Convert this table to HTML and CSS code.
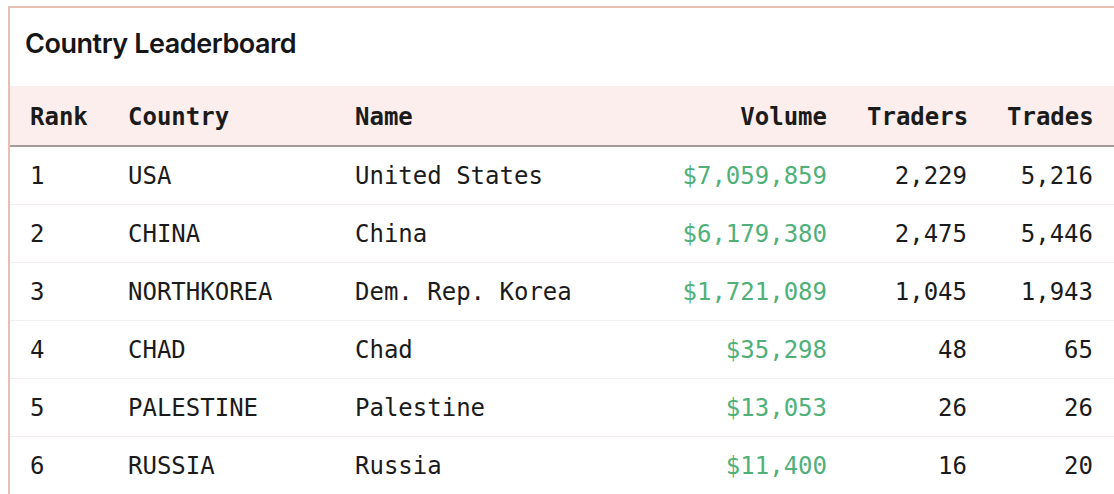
FILE: index.html
```html
<!DOCTYPE html>
<html>
<head>
<meta charset="utf-8">
<link rel="stylesheet" href="styles.css">
</head>
<body>
<div class="card">
  <h2 class="title">Country Leaderboard</h2>
  <table class="board">
    <colgroup>
      <col class="c-rank"><col class="c-country"><col class="c-name"><col class="c-vol"><col class="c-traders"><col class="c-trades">
    </colgroup>
    <thead>
      <tr><th>Rank</th><th>Country</th><th>Name</th><th class="num">Volume</th><th class="num">Traders</th><th class="num">Trades</th></tr>
    </thead>
    <tbody>
      <tr><td>1</td><td>USA</td><td>United States</td><td class="num vol">$7,059,859</td><td class="num">2,229</td><td class="num">5,216</td></tr>
      <tr><td>2</td><td>CHINA</td><td>China</td><td class="num vol">$6,179,380</td><td class="num">2,475</td><td class="num">5,446</td></tr>
      <tr><td>3</td><td>NORTHKOREA</td><td>Dem. Rep. Korea</td><td class="num vol">$1,721,089</td><td class="num">1,045</td><td class="num">1,943</td></tr>
      <tr><td>4</td><td>CHAD</td><td>Chad</td><td class="num vol">$35,298</td><td class="num">48</td><td class="num">65</td></tr>
      <tr><td>5</td><td>PALESTINE</td><td>Palestine</td><td class="num vol">$13,053</td><td class="num">26</td><td class="num">26</td></tr>
      <tr><td>6</td><td>RUSSIA</td><td>Russia</td><td class="num vol">$11,400</td><td class="num">16</td><td class="num">20</td></tr>
    </tbody>
  </table>
</div>
</body>
</html>
```
FILE: styles.css
```css
html, body {
  margin: 0;
  padding: 0;
  background: #ffffff;
  overflow: hidden;
}
body {
  padding: 6px 0 0 8px;
}
.card {
  width: 1104px;
  border: 2px solid #e6c0b2;
  background: #ffffff;
}
.title {
  margin: 0;
  height: 78px;
  box-sizing: border-box;
  padding: 19px 0 0 15px;
  font-family: "Inter", "Noto Sans", sans-serif;
  font-weight: 600;
  font-size: 27px;
  line-height: 34px;
  color: #161616;
  letter-spacing: -0.45px;
}
.board {
  width: 100%;
  table-layout: fixed;
  border-collapse: collapse;
  font-family: "DejaVu Sans Mono", "Liberation Mono", monospace;
  font-size: 24px;
  color: #1b1b1b;
}
.c-rank { width: 98px; }
.c-country { width: 227px; }
.c-name { width: 312px; }
.c-vol { width: 200px; }
.c-traders { width: 140px; }
.c-trades { width: 127px; }
.board th, .board td {
  text-align: left;
  padding: 0 20px;
  white-space: nowrap;
}
.board thead tr {
  background: #fbeeec;
  border-bottom: 2px solid #a29d9b;
}
.board th {
  height: 57px;
  font-weight: 700;
  padding-top: 2px;
}
.board td {
  height: 57px;
}
.board tbody tr {
  border-bottom: 1px solid #f2ecea;
}
.board .num {
  text-align: right;
}
.board tr > :last-child {
  padding-right: 21px;
}
.board .vol {
  color: #4fb079;
}
```
